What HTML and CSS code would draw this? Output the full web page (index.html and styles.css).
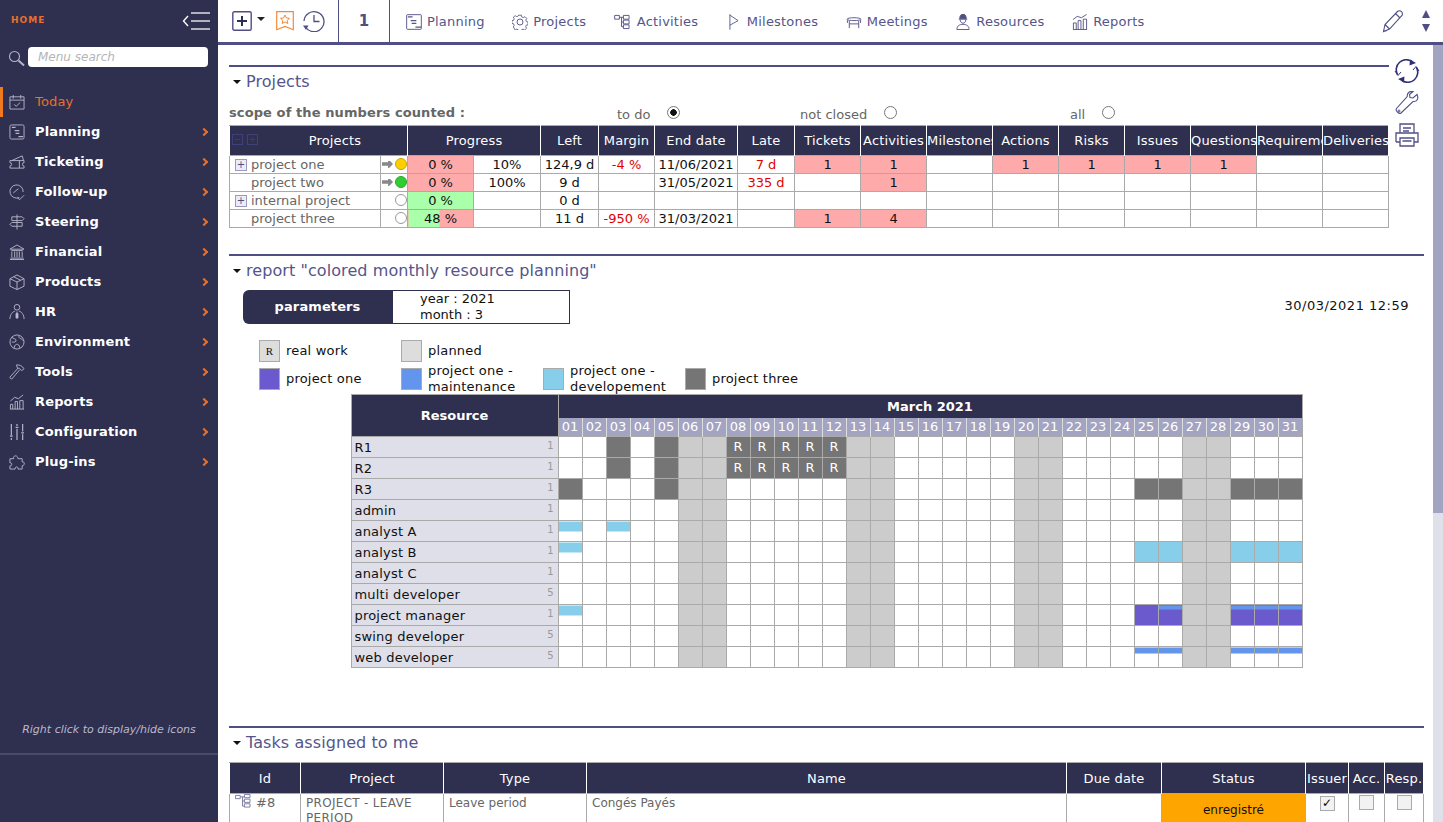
FILE: index.html
```html
<!DOCTYPE html>
<html lang="en">
<head>
<meta charset="utf-8">
<title>Today</title>
<link rel="stylesheet" href="styles.css">
</head>
<body>
<div class="app">
<aside class="sidebar">
  <div class="side-head">
    <span class="home">HOME</span>
    <svg class="burger" width="29" height="20" viewBox="0 0 29 20"><path d="M6 5 1.500 10 6 15" fill="none" stroke="#fff" stroke-width="1.400"/><path d="M9 2h19M9 10h19M9 18h19" stroke="#dcdce6" stroke-width="1.400"/></svg>
  </div>
  <div class="side-search">
    <svg width="17" height="17" viewBox="0 0 17 17"><circle cx="6.500" cy="6.500" r="5" fill="none" stroke="#b5b5c8" stroke-width="1.100"/><path d="M10.500 10.500 16 15.500" stroke="#b5b5c8" stroke-width="2"/></svg>
    <div class="search-box">Menu search</div>
  </div>
  <nav class="menu">
    <a class="item active"><svg viewBox="0 0 17 17"><path d="M1 3h15v13H1zM1 6.500h15M4.500 1v4M12.500 1v4M5.500 11l2.200 2.200 4-4.200"/></svg><span>Today</span></a>
    <a class="item"><svg viewBox="0 0 17 17"><rect x="1" y="1" width="15" height="15" rx="1.500"/><path d="M3 3.500h4M6 7h5M7 10h4M10 13.500h5" stroke-width="1.300"/></svg><span>Planning</span><b class="chev"></b></a>
    <a class="item"><svg viewBox="0 0 17 17"><path d="M1 7h15v2.200a1.800 1.800 0 0 0 0 3.600V15H1v-2.200a1.800 1.800 0 0 0 0-3.600zM3 7l11-5 1.500 5M11 7v8"/></svg><span>Ticketing</span><b class="chev"></b></a>
    <a class="item"><svg viewBox="0 0 17 17"><path d="M11 14.300A7 7 0 1 1 15 8.500M4.500 9.500 10 5M9 15l2.500 1.500L16 12"/></svg><span>Follow-up</span><b class="chev"></b></a>
    <a class="item"><svg viewBox="0 0 17 17"><path d="M8.500 0.500v16M3 3h11l2 2-2 2H3zM14 9H3l-2 2 2 2h11z"/></svg><span>Steering</span><b class="chev"></b></a>
    <a class="item"><svg viewBox="0 0 17 17"><path d="M1 5.500 8.500 1 16 5.500zM2.500 7h12M3 8v6M6 8v6M11 8v6M14 8v6M8.500 8v6M1.500 15h14M1 16.500h15"/></svg><span>Financial</span><b class="chev"></b></a>
    <a class="item"><svg viewBox="0 0 17 17"><path d="M1 5 8.500 1 16 5v8l-7.500 3.500L1 13zM1 5l7.500 3.500L16 5M8.500 8.500v8M5 3l7.500 3.700"/></svg><span>Products</span><b class="chev"></b></a>
    <a class="item"><svg viewBox="0 0 17 17"><circle cx="8.500" cy="3.500" r="3"/><path d="M1 16c0-5 3-8 5.500-8.500M16 16c0-5-3-8-5.500-8.500M8.500 8v6" /><path d="M7.500 10h2v5h-2z" fill="#c8c8d8"/></svg><span>HR</span><b class="chev"></b></a>
    <a class="item"><svg viewBox="0 0 17 17"><circle cx="8.500" cy="8.500" r="7.500"/><path d="M3 3.500c2 2 4 1 4.500 3S5 9 3 8.500M11 1.500c-1 2 0 3 1.500 3.500s2 2 3 2M5.500 15.500c0-2 .5-4 2.500-4.500s3 1 3.500 4"/></svg><span>Environment</span><b class="chev"></b></a>
    <a class="item"><svg viewBox="0 0 17 17"><path d="M8 1c3-.5 6 1 8 4l-2.500 2-2.500-2.500L9 4.500zM9.500 4.500 1 14c0 1 1 2 2 2l8.500-10"/></svg><span>Tools</span><b class="chev"></b></a>
    <a class="item"><svg viewBox="0 0 17 17"><path d="M1 16h15M1.500 16v-5h2.500v5M6.500 16V8h2.500v8M11.500 16V7H15v9M1.500 7.500 6 3.500l4 1.500 5-4"/></svg><span>Reports</span><b class="chev"></b></a>
    <a class="item"><svg viewBox="0 0 17 17"><path d="M2.500 0v12M2.500 15v2M8.500 0v2M8.500 5v12M14.500 0v8M14.500 11v6M1 13h3M7 3.500h3M13 9.500h3" stroke-width="1.300"/></svg><span>Configuration</span><b class="chev"></b></a>
    <a class="item"><svg viewBox="0 0 17 17"><path d="M1 5h4c-1.500-3 4-5 4.500 0H14v3.500c3-1 3 4 0 4V16H9.500c.8-3-3.500-3-3 0H1v-3.500c2.500 1 2.500-4 0-3z"/></svg><span>Plug-ins</span><b class="chev"></b></a>
  </nav>
  <div class="side-foot">Right click to display/hide icons</div>
</aside>

<div class="main">
  <header class="topbar">
    <div class="tb-tools">
      <svg width="20" height="20" viewBox="0 0 20 20"><rect x=".8" y=".8" width="18.400" height="18.400" rx="1.500" fill="none" stroke="#4f4f85" stroke-width="1.400"/><path d="M10 5v10M5 10h10" stroke="#2f2f50" stroke-width="2"/></svg>
      <span class="caret"></span>
      <svg class="tb-book" width="18" height="20" viewBox="0 0 18 20"><path d="M.7.700h16.600v18L9 15.500.7 18.700z" fill="none" stroke="#f08a3c" stroke-width="1.200"/><path d="M9 4l1.400 2.900 3.100.4-2.300 2.100.6 3.100L9 11l-2.800 1.500.6-3.100-2.300-2.100 3.100-.4z" fill="none" stroke="#f08a3c"/></svg>
      <svg class="tb-clock" width="23" height="22" viewBox="0 0 23 22"><path d="M3.500 17A10 10 0 1 0 2 11" fill="none" stroke="#4f4f85" stroke-width="1.300"/><path d="M12 5v6.500h5.500" fill="none" stroke="#4f4f85" stroke-width="1.300"/><path d="M1 15.500h5.500L4 20z" fill="#4f4f85"/></svg>
    </div>
    <div class="tb-count">1</div>
    <nav class="tb-nav">
      <a class="tb-link"><svg viewBox="0 0 17 17"><rect x=".7" y=".7" width="15.600" height="15.600" rx="1"/><path d="M2 3h5M5 7h6M6 10h5M10 14h6" stroke-width="1.300"/></svg>Planning</a>
      <a class="tb-link"><svg viewBox="0 0 17 17"><path d="M7 .7h3l.5 2 1.800.8 1.800-1.100 2.100 2.100-1.100 1.800.8 1.800 1.800.5v3l-2 .5-.7 1.700 1 1.800-2.100 2.100-1.800-1-1.800.7-.5 2H7l-.5-2-1.700-.7-1.800 1L.9 14.100l1-1.800-.7-1.700-2-.5v-3l2-.5.7-1.800-1-1.800L3 1.300l1.800 1.100 1.700-.8z" transform="translate(.6 .6) scale(.93)"/><circle cx="8.500" cy="8.500" r="3.200"/></svg>Projects</a>
      <a class="tb-link tb-act"><svg viewBox="0 0 17 17"><path d="M.7 1.500h5v4h-5zM10 1.500h6v4h-6zM10 6.500h6v4h-6zM10 11.500h6v4h-6zM5.700 3.500H10M8 3.500v10h2M8 8.500h2"/></svg>Activities</a>
      <a class="tb-link tb-mile"><svg viewBox="0 0 11 17"><path d="M1 0v17M1 1l9 6-9 5"/></svg>Milestones</a>
      <a class="tb-link"><svg viewBox="0 0 17 17"><path d="M1 5.500c0-2 15-2 15 0s-15 2-15 0zM3.500 7.500V15M13.500 7.500V15M3.500 10.500h10M1.500 6.500v3M15.500 6.500v3"/></svg>Meetings</a>
      <a class="tb-link"><svg viewBox="0 0 17 17"><path d="M5 5c0-3 1.500-5 3.500-5S12 2 12 5z" fill="#4f4f85"/><path d="M4 5.500h9M5.500 6c0 5 6 5 6 0M2 16.500c0-4 3-5.500 6.500-5.500s6.500 1.500 6.500 5.500z"/></svg>Resources</a>
      <a class="tb-link"><svg viewBox="0 0 17 17"><path d="M1 16.500h15M1.500 16.500v-7h3v7M6.500 16.500V7h3v9.500M12 16.500V5.500h3.500v11M1 6l4.500-3.500L10 4l5.500-3.500"/></svg>Reports</a>
    </nav>
    <div class="tb-right">
      <svg width="22" height="24" viewBox="0 0 22 24"><path d="M1.500 22.500 3 15.500 15.500 2.500c1-1 3-.8 4 .2s1.300 3 .3 4L7.500 20zM3 15.500l4.500 4.500M13.500 4.500 18 9M1.500 22.500l3-.8" fill="none" stroke="#4f4f85" stroke-width="1.100"/></svg>
      <div class="tb-arrows"><i class="up"></i><i class="down"></i></div>
    </div>
  </header>

  <div class="body">
    <div class="content">
      <section class="sec sec-projects">
        <div class="sec-main">
          <h2 class="sec-title"><span class="tri"></span>Projects</h2>
          <div class="scope">
            <strong class="scope-label">scope of the numbers counted :</strong>
            <span class="opt opt1">to do<i class="radio on"></i></span>
            <span class="opt opt2">not closed<i class="radio"></i></span>
            <span class="opt opt3">all<i class="radio"></i></span>
          </div>
          <table class="grid ptable">
            <colgroup>
              <col class="c151"><col class="c27"><col class="c66"><col class="c67"><col class="c58"><col class="c56"><col class="c83"><col class="c57"><col class="c66"><col class="c66"><col class="c66"><col class="c66"><col class="c66"><col class="c66"><col class="c66"><col class="c66"><col class="c66">
            </colgroup>
            <thead>
              <tr><th colspan="2" class="th-proj"><span class="fold"><i>−</i><i>+</i></span>Projects</th><th colspan="2">Progress</th><th>Left</th><th>Margin</th><th>End date</th><th>Late</th><th>Tickets</th><th>Activities</th><th>Milestones</th><th>Actions</th><th>Risks</th><th>Issues</th><th>Questions</th><th>Requirements</th><th>Deliveries</th></tr>
            </thead>
            <tbody>
              <tr><td class="pname"><i class="plus">+</i>project one</td><td class="ind"><i class="arrow"></i><i class="dot yellow"></i></td><td class="pink">0 %</td><td>10%</td><td>124,9 d</td><td class="red">-4 %</td><td>11/06/2021</td><td class="red">7 d</td><td class="pink">1</td><td class="pink">1</td><td></td><td class="pink">1</td><td class="pink">1</td><td class="pink">1</td><td class="pink">1</td><td></td><td></td></tr>
              <tr><td class="pname"><i class="plus none"></i>project two</td><td class="ind"><i class="arrow"></i><i class="dot green"></i></td><td class="pink">0 %</td><td>100%</td><td>9 d</td><td></td><td>31/05/2021</td><td class="red">335 d</td><td></td><td class="pink">1</td><td></td><td></td><td></td><td></td><td></td><td></td><td></td></tr>
              <tr><td class="pname"><i class="plus">+</i>internal project</td><td class="ind"><i class="dot"></i></td><td class="lgreen">0 %</td><td></td><td>0 d</td><td></td><td></td><td></td><td></td><td></td><td></td><td></td><td></td><td></td><td></td><td></td><td></td></tr>
              <tr><td class="pname"><i class="plus none"></i>project three</td><td class="ind"><i class="dot"></i></td><td class="split">48 %</td><td></td><td>11 d</td><td class="red">-950 %</td><td>31/03/2021</td><td></td><td class="pink">1</td><td class="pink">4</td><td></td><td></td><td></td><td></td><td></td><td></td><td></td></tr>
            </tbody>
          </table>
        </div>
        <div class="sec-icons">
          <svg class="sync" width="26" height="24" viewBox="0 0 26 24"><path d="M3.500 15.500A10 10 0 0 1 18 2.500M22.500 8.500A10 10 0 0 1 8 21.500" fill="none" stroke="#2f2f7a" stroke-width="1.600"/><path d="M16 .5l6 3.500-6.500 2.500zM10 23.500 4 20l6.500-2.500z" fill="#2f2f7a"/><path d="M1 12l3 4.500L7 13M25 12l-3-4.500L19 11" fill="none" stroke="#2f2f7a"/></svg>
          <svg width="24" height="24" viewBox="0 0 24 24"><path d="M22 3.500 18 7l-3-.5-.5-3L18 .500c-3-.5-6 1-5.800 5L1.500 17.500c-1.500 2 2.500 6 4.500 4.500L18 10.500c4 .5 6-3 4-7z" fill="none" stroke="#4f4f85" stroke-width="1.100"/><circle cx="4" cy="20" r="1" fill="none" stroke="#4f4f85"/></svg>
          <svg width="24" height="24" viewBox="0 0 24 24"><path d="M5 10V1h14v9M1 19V10h22v9h-4M5 19H1M5 15h14v8H5zM8 5h8M8 8h6M7.500 18h9" fill="none" stroke="#4f4f85" stroke-width="1.300"/></svg>
        </div>
      </section>

      <section class="sec sec-report">
        <h2 class="sec-title"><span class="tri"></span>report "colored monthly resource planning"</h2>
        <div class="param-row">
          <div class="param-label">parameters</div>
          <div class="param-vals">year : 2021<br>month : 3</div>
          <div class="param-date">30/03/2021 12:59</div>
        </div>
        <div class="legend">
          <div class="leg"><i class="sw sw-real">R</i><span>real work</span></div>
          <div class="leg"><i class="sw sw-plan"></i><span>planned</span></div>
          <div class="leg leg-empty"></div>
          <div class="leg leg-empty"></div>
          <div class="leg"><i class="sw sw-p1"></i><span>project one</span></div>
          <div class="leg"><i class="sw sw-p2"></i><span>project one - maintenance</span></div>
          <div class="leg"><i class="sw sw-p3"></i><span>project one - developement</span></div>
          <div class="leg"><i class="sw sw-p4"></i><span>project three</span></div>
        </div>
        <table class="gantt">
          <thead>
            <tr><th class="res" rowspan="2">Resource</th><th class="month" colspan="31">March 2021</th></tr>
            <tr class="days"><th>01</th><th>02</th><th>03</th><th>04</th><th>05</th><th>06</th><th>07</th><th>08</th><th>09</th><th>10</th><th>11</th><th>12</th><th>13</th><th>14</th><th>15</th><th>16</th><th>17</th><th>18</th><th>19</th><th>20</th><th>21</th><th>22</th><th>23</th><th>24</th><th>25</th><th>26</th><th>27</th><th>28</th><th>29</th><th>30</th><th>31</th></tr>
          </thead>
          <tbody>
            <tr><td class="rn"><span>R1</span><em>1</em></td><td></td><td></td><td class="g"></td><td></td><td class="g"></td><td class="w"></td><td class="w"></td><td class="g">R</td><td class="g">R</td><td class="g">R</td><td class="g">R</td><td class="g">R</td><td class="w"></td><td class="w"></td><td></td><td></td><td></td><td></td><td></td><td class="w"></td><td class="w"></td><td></td><td></td><td></td><td></td><td></td><td class="w"></td><td class="w"></td><td></td><td></td><td></td></tr>
            <tr><td class="rn"><span>R2</span><em>1</em></td><td></td><td></td><td class="g"></td><td></td><td class="g"></td><td class="w"></td><td class="w"></td><td class="g">R</td><td class="g">R</td><td class="g">R</td><td class="g">R</td><td class="g">R</td><td class="w"></td><td class="w"></td><td></td><td></td><td></td><td></td><td></td><td class="w"></td><td class="w"></td><td></td><td></td><td></td><td></td><td></td><td class="w"></td><td class="w"></td><td></td><td></td><td></td></tr>
            <tr><td class="rn"><span>R3</span><em>1</em></td><td class="g"></td><td></td><td></td><td></td><td class="g"></td><td class="w"></td><td class="w"></td><td></td><td></td><td></td><td></td><td></td><td class="w"></td><td class="w"></td><td></td><td></td><td></td><td></td><td></td><td class="w"></td><td class="w"></td><td></td><td></td><td></td><td class="g"></td><td class="g"></td><td class="w"></td><td class="w"></td><td class="g"></td><td class="g"></td><td class="g"></td></tr>
            <tr><td class="rn"><span>admin</span><em>1</em></td><td></td><td></td><td></td><td></td><td></td><td class="w"></td><td class="w"></td><td></td><td></td><td></td><td></td><td></td><td class="w"></td><td class="w"></td><td></td><td></td><td></td><td></td><td></td><td class="w"></td><td class="w"></td><td></td><td></td><td></td><td></td><td></td><td class="w"></td><td class="w"></td><td></td><td></td><td></td></tr>
            <tr><td class="rn"><span>analyst A</span><em>1</em></td><td class="skytop"></td><td></td><td class="skytop"></td><td></td><td></td><td class="w"></td><td class="w"></td><td></td><td></td><td></td><td></td><td></td><td class="w"></td><td class="w"></td><td></td><td></td><td></td><td></td><td></td><td class="w"></td><td class="w"></td><td></td><td></td><td></td><td></td><td></td><td class="w"></td><td class="w"></td><td></td><td></td><td></td></tr>
            <tr><td class="rn"><span>analyst B</span><em>1</em></td><td class="skytop"></td><td></td><td></td><td></td><td></td><td class="w"></td><td class="w"></td><td></td><td></td><td></td><td></td><td></td><td class="w"></td><td class="w"></td><td></td><td></td><td></td><td></td><td></td><td class="w"></td><td class="w"></td><td></td><td></td><td></td><td class="sky"></td><td class="sky"></td><td class="w"></td><td class="w"></td><td class="sky"></td><td class="sky"></td><td class="sky"></td></tr>
            <tr><td class="rn"><span>analyst C</span><em>1</em></td><td></td><td></td><td></td><td></td><td></td><td class="w"></td><td class="w"></td><td></td><td></td><td></td><td></td><td></td><td class="w"></td><td class="w"></td><td></td><td></td><td></td><td></td><td></td><td class="w"></td><td class="w"></td><td></td><td></td><td></td><td></td><td></td><td class="w"></td><td class="w"></td><td></td><td></td><td></td></tr>
            <tr><td class="rn"><span>multi developer</span><em>5</em></td><td></td><td></td><td></td><td></td><td></td><td class="w"></td><td class="w"></td><td></td><td></td><td></td><td></td><td></td><td class="w"></td><td class="w"></td><td></td><td></td><td></td><td></td><td></td><td class="w"></td><td class="w"></td><td></td><td></td><td></td><td></td><td></td><td class="w"></td><td class="w"></td><td></td><td></td><td></td></tr>
            <tr><td class="rn"><span>project manager</span><em>1</em></td><td class="skytop"></td><td></td><td></td><td></td><td></td><td class="w"></td><td class="w"></td><td></td><td></td><td></td><td></td><td></td><td class="w"></td><td class="w"></td><td></td><td></td><td></td><td></td><td></td><td class="w"></td><td class="w"></td><td></td><td></td><td></td><td class="pur"></td><td class="purblue"></td><td class="w"></td><td class="w"></td><td class="purblue"></td><td class="purblue"></td><td class="purblue"></td></tr>
            <tr><td class="rn"><span>swing developer</span><em>5</em></td><td></td><td></td><td></td><td></td><td></td><td class="w"></td><td class="w"></td><td></td><td></td><td></td><td></td><td></td><td class="w"></td><td class="w"></td><td></td><td></td><td></td><td></td><td></td><td class="w"></td><td class="w"></td><td></td><td></td><td></td><td></td><td></td><td class="w"></td><td class="w"></td><td></td><td></td><td></td></tr>
            <tr><td class="rn"><span>web developer</span><em>5</em></td><td></td><td></td><td></td><td></td><td></td><td class="w"></td><td class="w"></td><td></td><td></td><td></td><td></td><td></td><td class="w"></td><td class="w"></td><td></td><td></td><td></td><td></td><td></td><td class="w"></td><td class="w"></td><td></td><td></td><td></td><td class="bluetop"></td><td class="bluetop"></td><td class="w"></td><td class="w"></td><td class="bluetop"></td><td class="bluetop"></td><td class="bluetop"></td></tr>
          </tbody>
        </table>
      </section>

      <section class="sec sec-tasks">
        <h2 class="sec-title"><span class="tri"></span>Tasks assigned to me</h2>
        <table class="grid ttable">
          <colgroup><col class="t71"><col class="t143"><col class="t143"><col class="t480"><col class="t95"><col class="t144"><col class="t43"><col class="t36"><col class="t39"></colgroup>
          <thead><tr><th>Id</th><th>Project</th><th>Type</th><th>Name</th><th>Due date</th><th>Status</th><th>Issuer</th><th>Acc.</th><th>Resp.</th></tr></thead>
          <tbody>
            <tr>
              <td class="tid"><svg width="16" height="14" viewBox="0 0 17 15"><path d="M.5 1.500h5v3.500h-5zM10 .5h6v3.500h-6zM10 5.500h6v3.500h-6zM10 10.500h6v3.500h-6zM5.500 3H10M8 3v10h2M8 7.500h2" fill="none" stroke="#7a7aa0"/></svg>#8</td>
              <td class="tl tl-up">PROJECT - LEAVE PERIOD</td>
              <td class="tl">Leave period</td>
              <td class="tl">Congés Payés</td>
              <td></td>
              <td class="status">enregistré</td>
              <td class="tc"><i class="check on">✓</i></td>
              <td class="tc"><i class="check"></i></td>
              <td class="tc"><i class="check"></i></td>
            </tr>
          </tbody>
        </table>
      </section>
    </div>
    <div class="scrollbar"><div class="thumb"></div></div>
  </div>
</div>
</div>
</body>
</html>
```

FILE: styles.css
```css
* { box-sizing: border-box; }
html, body { margin: 0; height: 100%; overflow: hidden; }
body { font: 13px/16px "DejaVu Sans", Verdana, sans-serif; color: #111; background: #fff; }
i, em { font-style: normal; }
.app { display: flex; height: 822px; }

/* sidebar */
.sidebar { width: 218px; flex: none; background: #2f2f50; display: flex; flex-direction: column; }
.side-head { height: 42px; padding: 11px 7px 0 11px; display: flex; justify-content: space-between; align-items: flex-start; }
.home { color: #e8702a; font-size: 9px; font-weight: 700; letter-spacing: 1px; line-height: 19px; }
.side-search { height: 45px; padding: 5px 10px 0 8px; display: flex; gap: 3px; align-items: flex-start; }
.side-search svg { margin-top: 3px; }
.search-box { flex: 1; height: 20px; background: #fff; border-radius: 4px; color: #b5b5b5; font-style: italic; font-size: 12px; line-height: 20px; padding-left: 10px; }
.menu { display: flex; flex-direction: column; }
.item { height: 30px; display: flex; align-items: center; padding: 0 10px 0 9px; gap: 10px; color: #fff; font-weight: 700; font-size: 13px; letter-spacing: .15px; }
.item svg { width: 16px; height: 16px; flex: none; fill: none; stroke: #b4b4c8; stroke-width: 1; }
.item.active { color: #e8702a; font-weight: 400; box-shadow: inset 3px 0 #f07a1e; }
.chev { margin-left: auto; width: 6px; height: 6px; border-top: 2px solid #e8702a; border-right: 2px solid #e8702a; transform: rotate(45deg); margin-right: 1px; }
.side-foot { margin-top: auto; margin-bottom: 67px; height: 44px; border-bottom: 2px solid #4a4a6c; text-align: center; font-style: italic; font-size: 11px; color: #b9b9cc; padding-top: 11px; }

/* top bar */
.main { flex: 1; min-width: 0; display: flex; flex-direction: column; }
.topbar { height: 45px; flex: none; border-bottom: 3px solid #4f4f85; display: flex; align-items: stretch; }
.tb-tools { width: 121px; border-right: 1px solid #4f4f85; padding-left: 14px; display: flex; align-items: center; }
.caret { margin-left: 5px; width: 0; height: 0; border: 4px solid transparent; border-top: 4px solid #222; border-bottom: 0; margin-top: -4px; }
.tb-book { margin-left: 11px; }
.tb-clock { margin-left: 8px; }
.tb-count { width: 51px; border-right: 1px solid #4f4f85; text-align: center; font-weight: 700; font-size: 15px; line-height: 42px; color: #4f4f85; }
.tb-nav { display: flex; padding-left: 16px; gap: 27.700px; align-items: center; }
.tb-link { display: flex; align-items: center; gap: 5px; color: #55558a; font-size: 13px; letter-spacing: .2px; padding-top: 1px; }
.tb-link svg { width: 16px; height: 16px; fill: none; stroke: #55558a; stroke-width: 1; flex: none; }
.tb-act { gap: 7px; }
.tb-mile { margin-left: 3px; }
.tb-mile svg { width: 10px; margin-right: 3px; }
.tb-right { margin-left: auto; display: flex; align-items: center; gap: 18px; padding-right: 13px; }
.tb-arrows { display: flex; flex-direction: column; gap: 6px; }
.tb-arrows i { width: 0; height: 0; border-left: 4px solid transparent; border-right: 4px solid transparent; }
.tb-arrows .up { border-bottom: 8px solid #4f4f85; }
.tb-arrows .down { border-top: 8px solid #4f4f85; }

/* body */
.body { flex: 1; min-height: 0; display: flex; }
.content { flex: 1; min-width: 0; padding: 20px 0 0 11px; overflow: hidden; }
.scrollbar { width: 10px; flex: none; background: #e0e0ea; }
.thumb { height: 468px; background: #a3a3c2; }

.sec-title { margin: 0; height: 30px; padding: 1px 0 2px; font-size: 16px; font-weight: 400; line-height: 26px; color: #55558a; display: flex; align-items: center; letter-spacing: .08px; }
.tri { width: 0; height: 0; border: 4px solid transparent; border-top: 4px solid #111; border-bottom: 0; margin: 0 5px 0 4px; }

.sec-projects { display: flex; width: 1195px; height: 189px; }
.sec-main { width: 1160px; border-top: 2px solid #4f4f85; }
.sec-icons { flex: 1; display: flex; flex-direction: column; gap: 8px; padding: 0 0 0 6px; margin-top: -6px; }
.sync { margin-left: -1px; }
.scope { height: 28px; display: grid; grid-template-columns: 388px 183px 270px auto; align-items: center; color: #666; padding-top: 4px; }
.scope-label { color: #666; font-size: 13px; letter-spacing: .1px; white-space: nowrap; }
.opt { display: flex; align-items: center; color: #666; padding-top: 4px; gap: 17px; }
.radio { width: 13px; height: 13px; border-radius: 50%; border: 1px solid #777; background: #fff; margin-top: -5px; }
.radio.on { background: radial-gradient(circle, #111 0 3px, #fff 3.500px); }

/* grids */
table { border-collapse: collapse; table-layout: fixed; }
.grid th { background: #2f2f50; color: #fff; font-weight: 400; padding: 0; height: 30px; border: 1px solid #fff; border-top: 1px solid #aaa; border-bottom: 0; overflow: hidden; white-space: nowrap; text-align: center; letter-spacing: .15px; }
.grid td { border: 1px solid #aaa; padding: 0; height: 18px; line-height: 16px; text-align: center; overflow: hidden; white-space: nowrap; }
.ptable { width: 1160px; }
.c151 { width: 151px; } .c27 { width: 27px; } .c66 { width: 66px; } .c67 { width: 67px; } .c58 { width: 58px; } .c56 { width: 56px; } .c83 { width: 83px; } .c57 { width: 57px; }
.grid .th-proj { position: relative; padding-left: 33px; }
.fold { position: absolute; left: 2px; top: 8px; display: flex; gap: 4px; }
.fold i { width: 11px; height: 11px; border: 1px solid #3f3f7a; color: #3f3f7a; font-size: 9px; line-height: 9px; }
.grid .pname { text-align: left; color: #666; padding-left: 5px; border-right: 1px solid #aaa; }
.plus { display: inline-block; vertical-align: top; width: 12px; height: 12px; margin: 2px 4px 0 0; border: 1px solid #9a9ac0; background: #ececf4; color: #4f4f85; font-size: 10px; line-height: 9px; text-align: center; }
.plus.none { border: 0; background: none; }
.grid .ind { padding-left: 0; text-align: right; font-size: 0; }
.arrow { display: inline-block; width: 11px; height: 7px; background: #888; vertical-align: top; margin: 4px 2px 0 0; clip-path: polygon(0 25%, 55% 25%, 55% -20%, 100% 50%, 55% 120%, 55% 75%, 0 75%); }
.dot { display: inline-block; width: 12px; height: 12px; border-radius: 50%; border: 1px solid #999; background: #fff; margin: 1px 0 0 0; vertical-align: top; }
.dot.yellow { background: #ffd000; border-color: #c9a400; }
.dot.green { background: #32cd32; border-color: #2aa82a; }
.pink { background: #ffaaaa; }
.lgreen { background: #aaffaa; }
.split { background: linear-gradient(90deg, #aaffaa 48%, #ffaaaa 48%); }
.red { color: #e00000; }

/* report */
.sec-report { width: 1195px; border-top: 2px solid #4f4f85; height: 472px; }
.param-row { display: flex; margin: 4px 0 0 14px; height: 34px; }
.param-label { width: 149px; background: #2f2f50; color: #fff; font-weight: 700; text-align: center; line-height: 33px; border-radius: 6px 0 0 6px; letter-spacing: .1px; }
.param-vals { width: 178px; border: 1px solid #2f2f50; padding-left: 27px; line-height: 16px; }
.param-date { margin-left: auto; margin-right: 15px; line-height: 32px; letter-spacing: .5px; }
.legend { display: grid; grid-template-columns: repeat(4, 142px); grid-template-rows: 27px 29px; margin: 13px 0 1px 30px; }
.leg { display: flex; align-items: center; gap: 6px; }
.leg span { width: 112px; line-height: 16px; letter-spacing: .2px; }
.sw { width: 21px; height: 22px; flex: none; border: 1px solid #aaa; }
.sw-real { background: #ddd; font-family: "Liberation Serif", serif; font-size: 11px; text-align: center; line-height: 20px; }
.sw-plan { background: #ddd; }
.sw-p1 { background: #6a5acd; }
.sw-p2 { background: #6495ed; }
.sw-p3 { background: #87ceeb; }
.sw-p4 { background: #757575; }
.gantt { width: 952px; margin: 0 auto; border: 1px solid #aaa; }
.gantt th { padding: 0; font-weight: 400; }
.gantt .res { width: 207px; background: #2f2f50; color: #fff; font-weight: 700; border-right: 1px solid #aaa; }
.gantt .month { height: 23px; padding-top: 1px; background: #2f2f50; color: #fff; font-weight: 700; }
.gantt .days th { width: 24px; height: 19px; background: #a3a3c2; color: #fff; border-left: 1px solid #ddd; line-height: 16px; }
.gantt td { height: 21px; padding: 0; border: 1px solid #aaa; text-align: center; color: #fff; }
.gantt .rn { background: #dfdfe9; color: #111; text-align: left; padding: 0 4px 0 3px; position: relative; }
.rn span { display: block; margin-top: 2px; letter-spacing: .2px; }
.rn em { position: absolute; right: 4px; top: 2px; font-size: 10px; color: #999; line-height: 14px; }
.gantt .w { background: #ccc; }
.gantt .g { background: #757575; }
.gantt .sky { background: #87ceeb; }
.gantt .skytop { background: linear-gradient(#87ceeb 10px, #fff 10px); }
.gantt .pur { background: #6a5acd; }
.gantt .purblue { background: linear-gradient(#6495ed 4px, #6a5acd 4px); }
.gantt .bluetop { background: linear-gradient(#6495ed 6px, #fff 6px); }

/* tasks */
.sec-tasks { width: 1195px; border-top: 2px solid #4f4f85; }
.sec-tasks .sec-title { margin-bottom: 4px; }
.ttable { width: 1194px; }
.ttable th { height: 31px; padding-top: 1px; }
.t71 { width: 71px; } .t143 { width: 143px; } .t480 { width: 480px; } .t95 { width: 95px; } .t144 { width: 144px; } .t43 { width: 43px; } .t36 { width: 36px; } .t39 { width: 39px; }
.ttable td { vertical-align: top; height: 40px; }
.grid .tid { text-align: left; padding-left: 5px; color: #666; }
.tid svg { vertical-align: -1px; margin-right: 5px; }
.grid .tl { text-align: left; padding: 2px 5px 0; color: #666; font-size: 12px; line-height: 15px; white-space: normal; }
.grid .tl-up { letter-spacing: .3px; }
.grid .status { background: #ffa500; padding-top: 8px; font-size: 12px; }
.grid .tc { padding-top: 1px; }
.check { display: inline-block; width: 15px; height: 15px; border: 1px solid #aaa; background: #f2f2f2; font-size: 12px; line-height: 13px; color: #000; }
```
